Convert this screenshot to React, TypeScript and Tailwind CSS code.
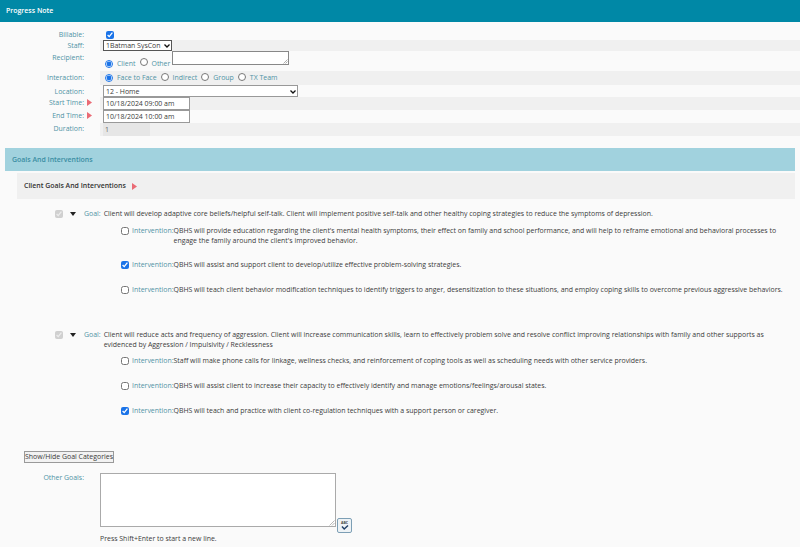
const font = { fontFamily: '"Open Sans", "Noto Sans", sans-serif' };

function Radio({ checked }: { checked?: boolean }) {
  return (
    <input
      type="radio"
      checked={!!checked}
      readOnly
      className="m-0 h-[8px] w-[8px] shrink-0 accent-[#1a73e8]"
    />
  );
}

function Arrow() {
  return (
    <svg width="5" height="7" viewBox="0 0 5 7" className="shrink-0">
      <path d="M0 0 L5 3.5 L0 7 Z" fill="#ea6b75" />
    </svg>
  );
}

function FormRow({
  label,
  height,
  shaded,
  arrow,
  labelClass,
  children,
}: {
  label: string;
  height: string;
  shaded?: boolean;
  arrow?: boolean;
  labelClass?: string;
  children: React.ReactNode;
}) {
  return (
    <div className={`flex ${height}`}>
      <div className={`relative w-[100px] shrink-0 pr-[16px] text-right text-[#4f93a5] ${labelClass ?? "pt-[1px]"}`}>
        {label}
        {arrow && <span className="absolute left-[87px] top-[2px]"><Arrow /></span>}
      </div>
      <div className={`flex flex-1 items-center ${shaded ? "bg-[#f0f0f0]" : ""}`}>{children}</div>
    </div>
  );
}

function Intervention({ checked, height, children }: { checked?: boolean; height: string; children: React.ReactNode }) {
  return (
    <div className={`flex ${height} pl-[121px] pr-[10px]`}>
      <input
        type="checkbox"
        checked={!!checked}
        readOnly
        className="mt-[1px] h-[8px] w-[8px] shrink-0 accent-[#1a73e8]"
      />
      <span className="ml-[3px] shrink-0 text-[#4f93a5]">Intervention:</span>
      <span className="text-[#3a3a3a]">{children}</span>
    </div>
  );
}

function Goal({ children }: { children: React.ReactNode }) {
  return (
    <div className="flex pl-[55px] pr-[12px]">
      <input type="checkbox" checked disabled readOnly className="mt-[1px] h-[8px] w-[8px] shrink-0 accent-[#c4c4c4]" />
      <svg width="6" height="4" viewBox="0 0 6 4" className="ml-[7px] mt-[3px] shrink-0">
        <path d="M0 0 H6 L3 4 Z" fill="#222" />
      </svg>
      <span className="ml-[8px] shrink-0 text-[#4f93a5]">Goal:</span>
      <span className="ml-[3px] text-[#3a3a3a]">{children}</span>
    </div>
  );
}

export default function App() {
  return (
    <div className="h-[547px] w-[800px] overflow-hidden bg-[#fafafa] text-[6.95px] leading-[10px]" style={font}>
      <div className="flex h-[22px] items-center bg-[#0088a6] pl-[6px] font-semibold text-white">Progress Note</div>

      <div className="pt-[7px]">
        <FormRow label="Billable:" height="h-[11px]">
          <input type="checkbox" checked readOnly className="ml-[6px] h-[8px] w-[8px] accent-[#1a73e8]" />
        </FormRow>
        <FormRow label="Staff:" height="h-[11px]" shaded>
          <div className="ml-[3px] flex h-[11px] w-[69px] items-center justify-between whitespace-nowrap border border-[#555] bg-white pl-[2px] pr-[1px] text-[#3a3a3a]">
            1Batman SysCon
            <svg width="6" height="4" viewBox="0 0 6 4"><path d="M0.5 0.5 L3 3 L5.5 0.5" fill="none" stroke="#111" strokeWidth="1.3" /></svg>
          </div>
        </FormRow>
        <FormRow label="Recipient:" height="h-[20px]" labelClass="pt-[1.5px]">
          <div className="ml-[5px] flex w-[67px] items-center whitespace-nowrap pt-[5px] text-[#4f93a5]">
            <Radio checked />
            <span className="ml-[4px]">Client</span>
            <span className="ml-[4px]"><Radio /></span>
            <span className="ml-[4px]">Other</span>
          </div>
          <div className="relative mb-[6px] h-[14px] w-[117px] border border-[#888] bg-white">
            <svg width="5" height="5" viewBox="0 0 5 5" className="absolute bottom-0 right-0">
              <path d="M0.5 4.5 L4.5 0.5 M2.5 4.5 L4.5 2.5" stroke="#777" strokeWidth="0.6" />
            </svg>
          </div>
        </FormRow>
        <FormRow label="Interaction:" height="h-[14px]" shaded labelClass="pt-[2px]">
          <div className="ml-[5px] flex items-center text-[#4f93a5]">
            <Radio checked />
            <span className="ml-[4px]">Face to Face</span>
            <span className="ml-[4px]"><Radio /></span>
            <span className="ml-[4px]">Indirect</span>
            <span className="ml-[4px]"><Radio /></span>
            <span className="ml-[4px]">Group</span>
            <span className="ml-[4px]"><Radio /></span>
            <span className="ml-[4px]">TX Team</span>
          </div>
        </FormRow>
        <FormRow label="Location:" height="h-[12px]" labelClass="pt-[2px]">
          <div className="ml-[3px] flex h-[12px] w-[195px] items-center justify-between border border-[#999] bg-white pl-[2px] pr-[1px] pt-[1px] text-[#3a3a3a]">
            12 - Home
            <svg width="6" height="4" viewBox="0 0 6 4"><path d="M0.5 0.5 L3 3 L5.5 0.5" fill="none" stroke="#111" strokeWidth="1.3" /></svg>
          </div>
        </FormRow>
        <FormRow label="Start Time:" height="h-[13px]" shaded arrow>
          <div className="ml-[3px] flex h-[13px] w-[87px] items-center border border-[#999] bg-white pl-[2px] text-[#3a3a3a]">10/18/2024 09:00 am</div>
        </FormRow>
        <FormRow label="End Time:" height="h-[13px]" arrow>
          <div className="ml-[3px] flex h-[13px] w-[87px] items-center border border-[#999] bg-white pl-[2px] text-[#3a3a3a]">10/18/2024 10:00 am</div>
        </FormRow>
        <FormRow label="Duration:" height="h-[13px]" shaded>
          <div className="ml-[3px] flex h-[13px] w-[47px] items-center bg-[#e6e6e6] pl-[2px] text-[#666]">1</div>
        </FormRow>
      </div>

      <div className="ml-[5px] mr-[5px] mt-[12px] flex h-[23px] items-center bg-[#a1d2de] pl-[7px] font-semibold text-[#3b8ea3]">
        Goals And Interventions
      </div>
      <div className="ml-[17px] mr-[5px] mt-[2px] flex h-[26px] items-center bg-[#f0f0f0] pl-[7px] font-semibold text-[#333]">
        Client Goals And Interventions
        <span className="ml-[6px]"><Arrow /></span>
      </div>

      <div className="pt-[10px]">
        <Goal>Client will develop adaptive core beliefs/helpful self-talk. Client will implement positive self-talk and other healthy coping strategies to reduce the symptoms of depression.</Goal>
        <div className="mt-[7px]">
          <Intervention height="h-[34px]">QBHS will provide education regarding the client's mental health symptoms, their effect on family and school performance, and will help to reframe emotional and behavioral processes to engage the family around the client's improved behavior.</Intervention>
          <Intervention checked height="h-[25px]">QBHS will assist and support client to develop/utilize effective problem-solving strategies.</Intervention>
          <Intervention height="h-[25px]">QBHS will teach client behavior modification techniques to identify triggers to anger, desensitization to these situations, and employ coping skills to overcome previous aggressive behaviors.</Intervention>
        </div>
        <div className="mt-[20px]">
          <Goal>Client will reduce acts and frequency of aggression. Client will increase communication skills, learn to effectively problem solve and resolve conflict improving relationships with family and other supports as evidenced by Aggression / Impulsivity / Recklessness</Goal>
        </div>
        <div className="mt-[6px]">
          <Intervention height="h-[25px]">Staff will make phone calls for linkage, wellness checks, and reinforcement of coping tools as well as scheduling needs with other service providers.</Intervention>
          <Intervention height="h-[25px]">QBHS will assist client to increase their capacity to effectively identify and manage emotions/feelings/arousal states.</Intervention>
          <Intervention checked height="h-[25px]">QBHS will teach and practice with client co-regulation techniques with a support person or caregiver.</Intervention>
        </div>
      </div>

      <div className="ml-[24px] mt-[20px] flex h-[12px] w-[90px] items-center justify-center whitespace-nowrap border border-[#999] bg-[#f2f2f2] text-[#3a3a3a]">
        Show/Hide Goal Categories
      </div>

      <div className="mt-[10px] flex">
        <div className="w-[84px] text-right text-[#4f93a5]">Other Goals:</div>
        <div className="ml-[16px]">
          <div className="flex items-end">
            <div className="relative h-[54px] w-[236px] border border-[#aaa] bg-white">
              <svg width="6" height="6" viewBox="0 0 6 6" className="absolute bottom-0 right-0">
                <path d="M0.5 5.5 L5.5 0.5 M3 5.5 L5.5 3" stroke="#888" strokeWidth="0.6" />
              </svg>
            </div>
            <div className="-mb-[6px] ml-[1px] flex h-[15px] w-[15px] flex-col items-center justify-center rounded-[2px] border border-[#7d9fb5] bg-[#eef3f6]">
              <span className="text-[3.5px] font-bold leading-[4px] text-[#444]">ABC</span>
              <svg width="8" height="5" viewBox="0 0 8 5">
                <path d="M1 1.5 L3.2 4 L7 0.5" fill="none" stroke="#1f3f66" strokeWidth="1.4" />
              </svg>
            </div>
          </div>
          <div className="mt-[7px] text-[#3a3a3a]">Press Shift+Enter to start a new line.</div>
        </div>
      </div>
    </div>
  );
}
